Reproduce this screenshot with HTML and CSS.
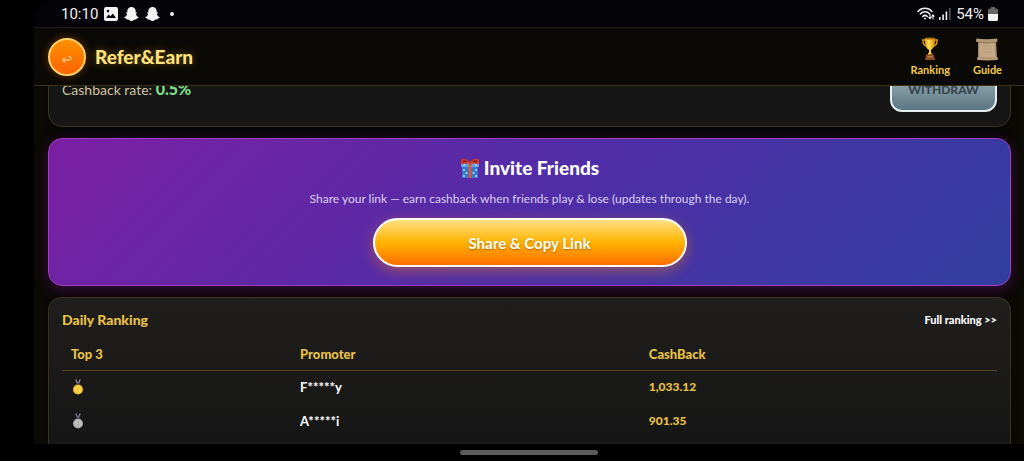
FILE: index.html
```html
<!DOCTYPE html>
<html lang="en">
<head>
    <meta charset="UTF-8">
    <title>Refer&amp;Earn</title>
    <link rel="stylesheet" href="styles.css">
</head>
<body>
<div class="status">
    <span class="time">10:10</span>
    <svg class="icon" width="14" height="14" viewBox="0 0 14 14">
        <path fill="#f2f2f2" fill-rule="evenodd" d="M2 0h10a2 2 0 0 1 2 2v10a2 2 0 0 1-2 2H2a2 2 0 0 1-2-2V2a2 2 0 0 1 2-2zM2 11h10L8.800 6.500 6.500 9.300 4.600 7.500zM4 2.800a1.300 1.300 0 1 0 0 2.600 1.300 1.300 0 0 0 0-2.600z"/>
    </svg>
    <svg class="icon" width="15" height="14" viewBox="0 0 15 14">
        <path id="ghost" fill="#f2f2f2" d="M7.500 0C5 0 3.300 1.700 3.300 4v1.600l-1.300-.2c-.5.500.3 1.100 1.200 1.500C2.700 8.500 1.800 9.600.2 10.200c-.2.700.9 1.100 2 1.300l.4 1.100c1.700-.3 2.600.1 3.300.8.900.8 2.300.8 3.200 0 .7-.7 1.600-1.100 3.300-.8l.4-1.100c1.100-.2 2.200-.6 2-1.300-1.600-.6-2.500-1.700-3-3.300.9-.4 1.700-1 1.200-1.500l-1.300.2V4C11.700 1.700 10 0 7.500 0z"/>
    </svg>
    <svg class="icon" width="15" height="14" viewBox="0 0 15 14"><use href="#ghost"/></svg>
    <span class="dot"></span>
    <div class="status_right">
        <svg width="18" height="14" viewBox="0 0 18 14" fill="none" stroke="#eee" stroke-width="1.500" stroke-linecap="round">
            <path d="M1 4.500C4.500.3 11.500.3 15 4.500M3.300 7c2.600-2.900 6.800-2.900 9.400 0M5.700 9.500c1.400-1.400 3.200-1.400 4.600 0"/>
            <circle cx="8" cy="11.500" r="1" fill="#eee" stroke="none"/>
            <path stroke-width="1.100" d="M13 7.500v4M11.800 10.300l1.200 1.400 1.200-1.400M16 12V8M14.900 9.200L16 7.800l1.100 1.400"/>
        </svg>
        <svg width="13" height="13" viewBox="0 0 13 13">
            <path fill="#eee" d="M0 10h1.600v3H0zM3.300 7.500h1.600V13H3.300zM6.600 4.500h1.600V13H6.600z"/>
            <path fill="#555" d="M10 1h1.600v12H10z"/>
        </svg>
        <span class="percent">54%</span>
        <svg width="10" height="14" viewBox="0 0 10 14">
            <path fill="#666" d="M3 0h4v1.500h1.500A1.500 1.500 0 0 1 10 3v4H0V3a1.500 1.500 0 0 1 1.500-1.500H3z"/>
            <path fill="#f4f4f4" d="M0 7h10v5.500A1.500 1.500 0 0 1 8.500 14h-7A1.500 1.500 0 0 1 0 12.500z"/>
        </svg>
    </div>
</div>

<header class="header">
    <button class="back" type="button" aria-label="Back">
        <svg width="10" height="8" viewBox="0 0 10 8" fill="none" stroke="#ffe9c0" stroke-width="1">
            <path d="M3 2.500L.8 5 3 7.500M1 5h6.300a1.700 1.700 0 0 0 0-3.400H6.500"/>
        </svg>
    </button>
    <h1>Refer&amp;Earn</h1>
    <nav class="links">
        <a href="#ranking">
            <svg width="16" height="24" viewBox="0 0 16 24">
                <defs>
                    <linearGradient id="cup">
                        <stop offset="0" stop-color="#e89b08"/>
                        <stop offset=".4" stop-color="#ffe25a"/>
                        <stop offset="1" stop-color="#d98200"/>
                    </linearGradient>
                </defs>
                <path fill="none" stroke="#e0a51b" stroke-width="1.300" d="M3.500 3H.8c0 3 1 5.500 4 6.500M12.500 3h2.700c0 3-1 5.500-4 6.500"/>
                <path fill="url(#cup)" d="M2.800 1.200h10.400c0 6-1 10.300-4.200 11.600v2.400l1.500 2.600h-5L7 15.200v-2.400C3.800 11.500 2.800 7.200 2.800 1.200z"/>
                <ellipse cx="8" cy="1.600" rx="5.200" ry="1" fill="#b86b08"/>
                <path fill="#8a4a26" d="M4 17.500h8l1 5.500H3z"/>
                <path fill="#b87a45" d="M5.500 19h5v1.500h-5z"/>
            </svg>
            Ranking
        </a>
        <a href="#guide">
            <svg width="24" height="24" viewBox="0 0 24 24">
                <path fill="#a88b6a" d="M3 3h18l1 18H3z"/>
                <path fill="#c4a987" d="M4.500 5h15l.8 15H4.500z"/>
                <path fill="#b39672" d="M1.500 1.500Q12 3 22 1.500q1 1.500 0 3.500Q12 6 1.500 5q-1-2 0-3.500z"/>
                <path fill="#866a4c" d="M3 5Q12 6 21 5v.8Q12 7 3 5.800z"/>
                <path fill="#b99b77" d="M2.500 20q10 1.200 20 0 .8 1.500 0 3-10 .8-20 0-.8-1.500 0-3z"/>
                <path stroke="#b39775" stroke-width=".6" fill="none" d="M7 9h10M7 12h10M7 15h10"/>
            </svg>
            Guide
        </a>
    </nav>
</header>

<main class="content">
    <section class="card account">
        <p>Cashback rate: <strong>0.5%</strong></p>
        <button class="withdraw" type="button">WITHDRAW</button>
    </section>

    <section class="card invite">
        <h2>
            <svg width="20" height="20" viewBox="0 0 20 20">
                <path fill="#3479cf" d="M2 8h16v12H2z"/>
                <path fill="#5da2e8" d="M1 5h18v4H1z"/>
                <g fill="#c5e4ff">
                    <circle cx="4" cy="7" r="1"/><circle cx="16" cy="7" r="1"/>
                    <circle cx="4" cy="12" r="1"/><circle cx="6.500" cy="15" r="1"/><circle cx="4" cy="18" r="1"/>
                    <circle cx="16" cy="12" r="1"/><circle cx="13.500" cy="15" r="1"/><circle cx="16" cy="18" r="1"/>
                </g>
                <path fill="#d9583f" d="M8.500 5h3v15h-3z"/>
                <path fill="#d63a24" d="M10 4C7 .5 3 0 1 1.500.500 4 1 6 2.500 6.500 5 5 8 5.500 10 5.500s5-.5 7.500 1C19 6 19.500 4 19 1.500 17 0 13 .5 10 4z"/>
                <path fill="#8e1d15" d="M8.300 4C6.500 2.500 4.500 2 3 2.500v2C5 3.500 7 4 8.300 4zM11.700 4c1.800-1.500 3.800-2 5.300-1.500v2C15 3.500 13 4 11.700 4z"/>
            </svg>
            Invite Friends
        </h2>
        <p>Share your link — earn cashback when friends play &amp; lose (updates through the day).</p>
        <button class="share" type="button">Share &amp; Copy Link</button>
    </section>

    <section class="card ranking" id="ranking">
        <div class="ranking_top">
            <h2>Daily Ranking</h2>
            <a href="#full">Full ranking &gt;&gt;</a>
        </div>
        <table>
            <thead>
            <tr>
                <th class="col_top">Top 3</th>
                <th class="col_name">Promoter</th>
                <th>CashBack</th>
            </tr>
            </thead>
            <tbody>
            <tr>
                <td>
                    <svg class="medal" width="14" height="16" viewBox="0 0 14 16" role="img" aria-label="1">
                        <path stroke="#9c8ba8" stroke-width="1.200" d="M4.800.5l1.700 4M9.200.5l-1.700 4"/>
                        <circle cx="7" cy="10.500" r="5" fill="#eebb2c"/>
                        <circle cx="7" cy="10.500" r="3.500" fill="#f9d64b"/>
                        <path stroke="#e2ac2a" stroke-width=".8" d="M7 8.500v4"/>
                    </svg>
                </td>
                <td>F*****y</td>
                <td class="money">1,033.12</td>
            </tr>
            <tr>
                <td>
                    <svg class="medal" width="14" height="16" viewBox="0 0 14 16" role="img" aria-label="2">
                        <path stroke="#8589a8" stroke-width="1.200" d="M4.800.5l1.700 4M9.200.5l-1.700 4"/>
                        <circle cx="7" cy="10.500" r="5" fill="#a8a8a8"/>
                        <circle cx="7" cy="10.500" r="3.500" fill="#c6c6c6"/>
                        <path fill="none" stroke="#999" stroke-width=".8" d="M5.800 9.300q1.200-1.300 2.200 0 .2 1-2 3h2.500"/>
                    </svg>
                </td>
                <td>A*****i</td>
                <td class="money">901.35</td>
            </tr>
            </tbody>
        </table>
    </section>
</main>

<div class="gesture"><span></span></div>
</body>
</html>
```
FILE: styles.css
```css
*{
    margin: 0;
    padding: 0;
    box-sizing: border-box;
}
body{
    display: flex;
    flex-direction: column;
    height: 100vh;
    padding-left: 34px;
    overflow: hidden;
    background-color: #000;
    color: #fff;
    font-family: Lato, "Liberation Sans", sans-serif;
    font-size: 13px;
    line-height: 18px;
}
button{
    font-family: inherit;
    cursor: pointer;
}
a{
    text-decoration: none;
}
svg{
    flex: none;
}

/* phone status bar */
.status{
    display: flex;
    align-items: center;
    height: 27px;
    padding: 0 26px 0 27px;
    border-top-left-radius: 16px;
    background-color: #030308;
    color: #f0f0f0;
    font-family: Roboto, sans-serif;
    font-size: 15px;
}
.time{
    width: 37px;
    margin-right: 6px;
    white-space: nowrap;
}
.status .icon{
    margin-right: 6px;
}
.dot{
    width: 4px;
    height: 4px;
    margin-left: 4px;
    border-radius: 50%;
    background-color: #eee;
}
.status_right{
    display: flex;
    align-items: center;
    gap: 4px;
    margin-left: auto;
}

/* header */
.header{
    position: relative;
    z-index: 1;
    display: flex;
    align-items: center;
    height: 59px;
    padding: 0 22px 0 14px;
    border-top: 1px solid #1c1b18;
    border-bottom: 1px solid #3b3215;
    background-color: #0b0906;
}
.back{
    display: flex;
    align-items: center;
    justify-content: center;
    width: 38px;
    height: 38px;
    padding-top: 4px;
    border: 2px solid #ffd36b;
    border-radius: 50%;
    background: linear-gradient(#ff9100, #ff6200);
    box-shadow: 0 0 8px rgba(255, 120, 0, .4);
}
.header h1{
    margin-left: 9px;
    color: #ffe07a;
    font-size: 19px;
    font-weight: 900;
    line-height: 24px;
    text-shadow: 0 0 10px rgba(255, 200, 40, .4);
}
.links{
    display: flex;
    gap: 23px;
    margin-left: auto;
}
.links a{
    display: flex;
    flex-direction: column;
    align-items: center;
    gap: 2px;
    color: #f3c94b;
    font-size: 11px;
    font-weight: bold;
    line-height: 14px;
}

/* page */
.content{
    flex: 1;
    display: flex;
    flex-direction: column;
    gap: 11px;
    min-height: 0;
    padding: 0 13px 0 14px;
    overflow: hidden;
    background: linear-gradient(90deg, #0c0a04, #080606 3%, #080606 97%, #0c0a04);
}
.card{
    border: 1px solid #3a341f;
    border-radius: 14px;
    background: linear-gradient(#1f1e1c, #161616);
}
.account{
    display: flex;
    align-items: center;
    justify-content: space-between;
    margin-top: -35px;
    padding: 14px 13px;
    color: #cfc49f;
    background: #161617;
}
.account p{
    font-size: 14px;
}
.account strong{
    color: #7fdc86;
    font-size: 16px;
    font-weight: 900;
}
.withdraw{
    width: 107px;
    height: 46px;
    border: 2px solid #e8eef0;
    border-radius: 12px;
    background: linear-gradient(#a9bac2, #5a7682);
    color: #36454d;
    font-size: 12px;
    font-weight: 900;
}

.invite{
    display: flex;
    flex-direction: column;
    align-items: center;
    gap: 10px;
    padding: 17px 13px 18px;
    border-color: #a23cc0;
    background: linear-gradient(135deg, #7b1fa2, #512da8 50%, #303f9f);
    box-shadow: 0 4px 14px rgba(140, 30, 170, .35);
}
.invite h2{
    display: flex;
    align-items: center;
    gap: 4px;
    font-size: 19px;
    font-weight: 900;
    line-height: 24px;
}
.invite p{
    color: #dccff0;
    font-size: 12px;
}
.share{
    width: 314px;
    max-width: 100%;
    height: 49px;
    border: 2px solid #fff;
    border-radius: 25px;
    background: linear-gradient(#ffe082, #ffb300 50%, #ff6f00);
    box-shadow: 0 4px 14px rgba(255, 140, 0, .4);
    color: #fffbe6;
    font-size: 15px;
    font-weight: 900;
    text-shadow: 0 1px 2px rgba(120, 60, 0, .6);
}

.ranking{
    flex: 1 0 auto;
    padding: 13px 13px 0;
    border-bottom: none;
    border-radius: 14px 14px 0 0;
}
.ranking_top{
    display: flex;
    align-items: center;
    justify-content: space-between;
    margin-bottom: 9px;
}
.ranking_top h2{
    color: #e8c048;
    font-size: 14px;
    font-weight: 900;
}
.ranking_top a{
    color: #fff;
    font-size: 11px;
    font-weight: 900;
}
table{
    width: 100%;
    border-collapse: collapse;
    table-layout: fixed;
}
th, td{
    padding: 0 9px;
    text-align: left;
    font-weight: bold;
}
th{
    height: 32px;
    border-bottom: 1px solid #5a4520;
    color: #e8c048;
    font-weight: 900;
}
td{
    height: 34px;
}
.col_top{
    width: 24.5%;
}
.col_name{
    width: 37.3%;
}
.money{
    color: #e8c048;
    font-size: 12px;
    font-weight: 900;
}
.medal{
    display: block;
}

/* gesture bar */
.gesture{
    display: flex;
    align-items: center;
    justify-content: center;
    height: 17px;
}
.gesture span{
    width: 138px;
    height: 5px;
    border-radius: 3px;
    background-color: #5c5c5c;
}
```
